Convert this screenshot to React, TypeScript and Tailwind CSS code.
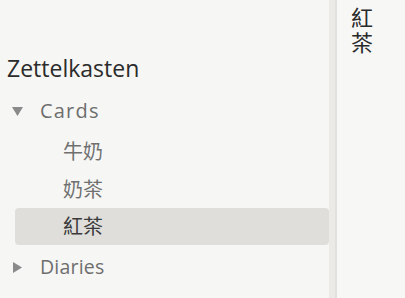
import React from "react";

const font = { fontFamily: '"Open Sans", "Noto Sans CJK TC", "Noto Sans CJK SC", sans-serif' };

export default function App() {
  return (
    <div className="flex h-[298px] w-[405px] overflow-hidden bg-[#f6f6f4]" style={font}>
      <div className="flex w-[329px] shrink-0 flex-col bg-[#f6f6f4] pt-[52px]">
        <div className="h-[40px] pl-[7px] text-[23px] leading-[32px] text-[#2b2b2b]">Zettelkasten</div>
        <div className="flex h-[38px] items-center pl-[12px] text-[20px] tracking-[1.2px] text-[#6e6e6e]">
          <svg width="11" height="9" viewBox="0 0 11 9" className="mr-[17px]">
            <polygon points="0,0 11,0 5.5,9" fill="#8a8a8a" />
          </svg>
          Cards
        </div>
        <div className="flex flex-col py-[3px]">
          <div className="flex h-[38px] items-center pl-[63px] text-[20px] text-[#707070]">牛奶</div>
          <div className="flex h-[37px] items-center pl-[63px] text-[20px] text-[#707070]">奶茶</div>
          <div className="ml-[15px] flex h-[37px] items-center rounded-[4px] bg-[#dfdedb] pl-[48px] text-[20px] text-[#3a3a3a]">紅茶</div>
        </div>
        <div className="flex h-[38px] items-center pl-[13px] text-[19.5px] tracking-[0.2px] text-[#6e6e6e]">
          <svg width="9" height="11" viewBox="0 0 9 11" className="mr-[18px]">
            <polygon points="0,0 9,5.5 0,11" fill="#8a8a8a" />
          </svg>
          Diaries
        </div>
      </div>
      <div className="w-[6px] shrink-0 bg-[#ebeae7]" />
      <div className="w-[2px] shrink-0 bg-[#e2e1de]" />
      <div className="flex-1 bg-[#f7f7f5] pl-[14px] pr-[14px] pt-[5px]">
        <div className="text-[22px] leading-[25px] text-[#2a2a2a]">紅茶</div>
      </div>
    </div>
  );
}
